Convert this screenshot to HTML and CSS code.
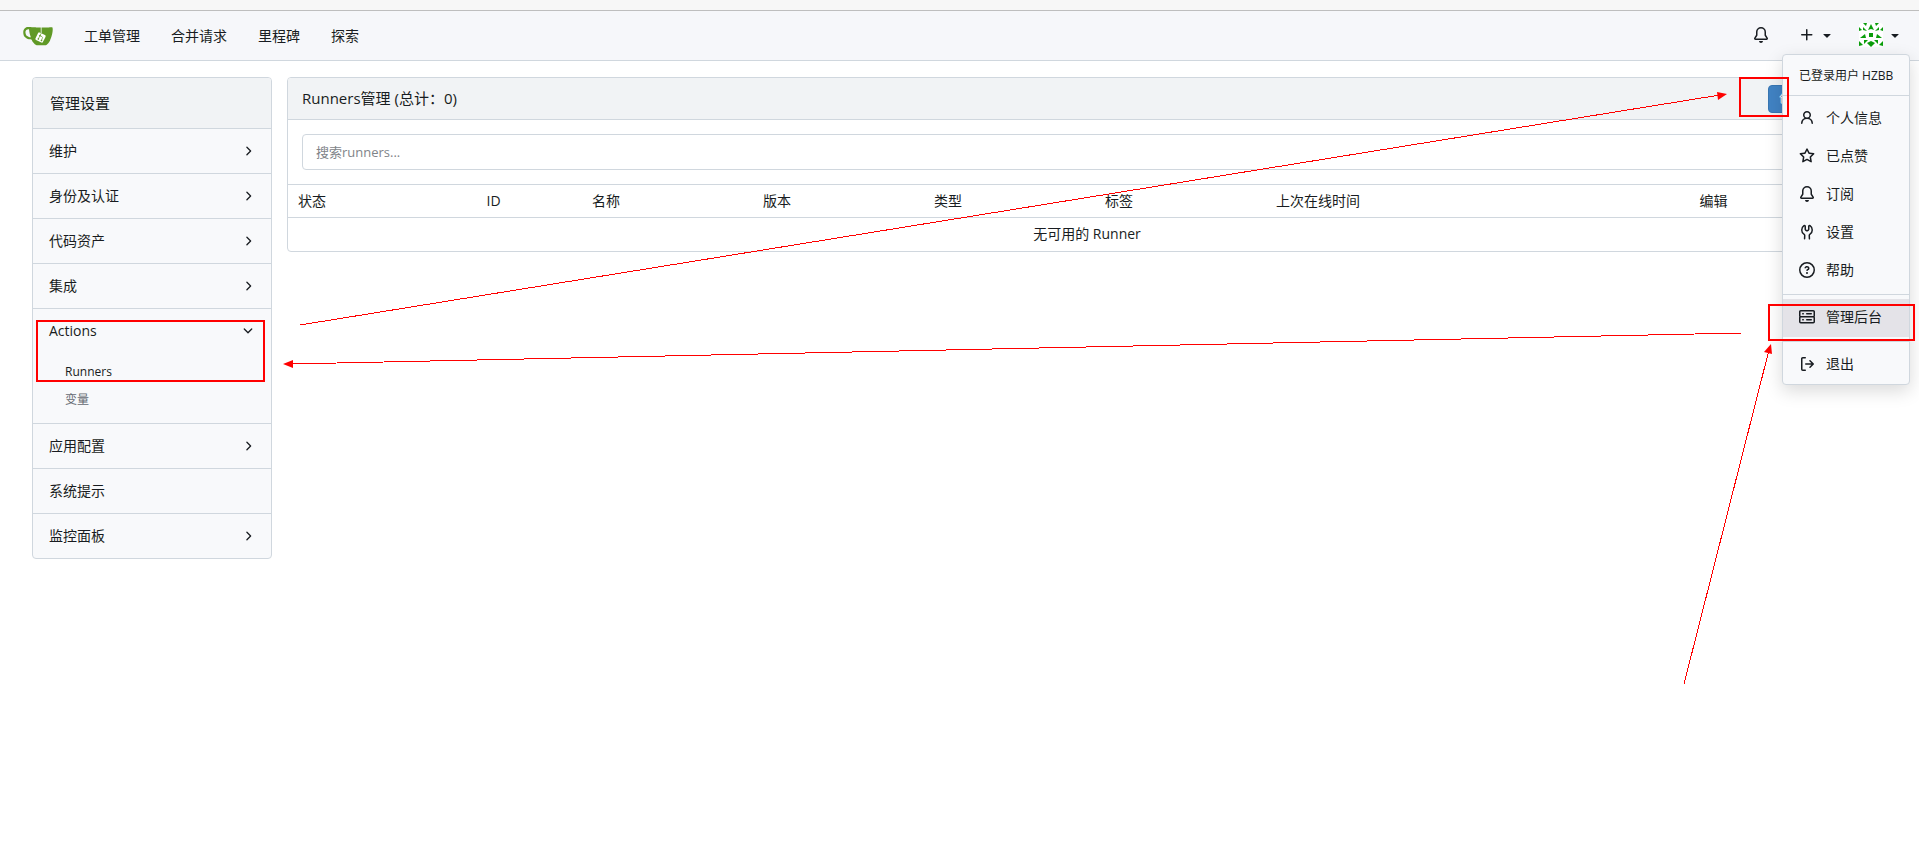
FILE: index.html
```html
<!DOCTYPE html>
<html lang="zh-CN">
<head>
<meta charset="utf-8">
<title>Runners管理</title>
<link rel="stylesheet" href="styles.css">
</head>
<body>
<svg class="sprite" aria-hidden="true">
  <symbol id="bell" viewBox="0 0 16 16"><path d="M8 16a2 2 0 0 0 1.985-1.75c.017-.137-.097-.25-.235-.25h-3.5c-.138 0-.252.113-.235.25A2 2 0 0 0 8 16ZM3 5a5 5 0 0 1 10 0v2.947c0 .05.015.098.042.139l1.703 2.555A1.519 1.519 0 0 1 13.482 13H2.518a1.516 1.516 0 0 1-1.263-2.36l1.703-2.554A.255.255 0 0 0 3 7.947Zm5-3.5A3.5 3.5 0 0 0 4.5 5v2.947c0 .346-.102.683-.294.97l-1.703 2.556a.017.017 0 0 0-.003.01l.001.006c0 .002.002.004.004.006l.006.004.007.001h10.964l.007-.001.006-.004.004-.006.001-.007a.017.017 0 0 0-.003-.01l-1.703-2.554a1.745 1.745 0 0 1-.294-.97V5A3.5 3.5 0 0 0 8 1.500Z"/></symbol>
  <symbol id="plus" viewBox="0 0 16 16"><path d="M7.75 2a.75.75 0 0 1 .75.75V7h4.25a.75.75 0 0 1 0 1.500H8.500v4.250a.75.75 0 0 1-1.500 0V8.500H2.750a.75.75 0 0 1 0-1.500H7V2.750A.75.75 0 0 1 7.750 2Z"/></symbol>
  <symbol id="caret" viewBox="0 0 16 16"><path d="m4.427 7.427 3.396 3.396a.25.25 0 0 0 .354 0l3.396-3.396A.25.25 0 0 0 11.396 7H4.604a.25.25 0 0 0-.177.427Z"/></symbol>
  <symbol id="person" viewBox="0 0 16 16"><path d="M10.561 8.073a6.005 6.005 0 0 1 3.432 5.142.75.75 0 1 1-1.498.07 4.500 4.500 0 0 0-8.990 0 .75.75 0 0 1-1.498-.07 6.004 6.004 0 0 1 3.431-5.142 3.999 3.999 0 1 1 5.123 0ZM10.500 5a2.500 2.500 0 1 0-5 0 2.500 2.500 0 0 0 5 0Z"/></symbol>
  <symbol id="star" viewBox="0 0 16 16"><path d="M8 .25a.75.75 0 0 1 .673.418l1.882 3.815 4.210.612a.75.75 0 0 1 .416 1.279l-3.046 2.970.719 4.192a.751.751 0 0 1-1.088.791L8 12.347l-3.766 1.980a.75.75 0 0 1-1.088-.79l.72-4.194L.818 6.374a.75.75 0 0 1 .416-1.280l4.210-.611L7.327.668A.75.75 0 0 1 8 .25Zm0 2.445L6.615 5.500a.75.75 0 0 1-.564.410l-3.097.450 2.240 2.184a.75.75 0 0 1 .216.664l-.528 3.084 2.769-1.456a.75.75 0 0 1 .698 0l2.770 1.456-.530-3.084a.75.75 0 0 1 .216-.664l2.240-2.183-3.096-.450a.75.75 0 0 1-.564-.410L8 2.694Z"/></symbol>
  <symbol id="tools" viewBox="0 0 16 16"><path d="M5.433 2.304A4.494 4.494 0 0 0 3.500 6c0 1.598.832 3.002 2.090 3.802.518.328.929.923.902 1.640v.008l-.164 3.337a.75.75 0 1 1-1.498-.073l.163-3.330c.002-.085-.050-.216-.207-.316A5.996 5.996 0 0 1 2 6a5.993 5.993 0 0 1 2.567-4.920 1.482 1.482 0 0 1 1.673-.040c.462.296.760.827.760 1.423v2.820c0 .082.041.160.110.206l.750.510a.25.25 0 0 0 .280 0l.750-.510A.249.249 0 0 0 9 5.282V2.463c0-.596.298-1.127.760-1.423a1.482 1.482 0 0 1 1.673.040A5.993 5.993 0 0 1 14 6a5.996 5.996 0 0 1-2.786 5.068c-.157.100-.209.230-.207.315l.163 3.330a.752.752 0 0 1-1.094.714.750.750 0 0 1-.404-.640l-.164-3.345c-.027-.717.384-1.312.902-1.640A4.495 4.495 0 0 0 12.500 6a4.494 4.494 0 0 0-1.933-3.696c-.024.017-.067.067-.067.160v2.818a1.750 1.750 0 0 1-.767 1.448l-.750.510a1.750 1.750 0 0 1-1.966 0l-.750-.510A1.750 1.750 0 0 1 5.500 5.282V2.463c0-.092-.043-.142-.067-.159Z"/></symbol>
  <symbol id="question" viewBox="0 0 16 16"><path d="M0 8a8 8 0 1 1 16 0A8 8 0 0 1 0 8Zm8-6.500a6.500 6.500 0 1 0 0 13 6.500 6.500 0 0 0 0-13ZM6.920 6.085h.001a.749.749 0 1 1-1.342-.670c.169-.339.436-.701.849-.977C6.845 4.160 7.369 4 8 4a2.756 2.756 0 0 1 1.637.525c.503.377.863.965.863 1.725 0 .448-.115.830-.329 1.150-.205.307-.470.513-.692.662-.109.072-.220.138-.313.195l-.006.004a6.240 6.240 0 0 0-.260.160.952.952 0 0 0-.276.245.750.750 0 0 1-1.248-.832c.184-.264.420-.489.692-.661.103-.067.207-.132.313-.195l.007-.004c.100-.061.182-.110.258-.161a.969.969 0 0 0 .277-.245C8.960 6.514 9 6.427 9 6.250a.612.612 0 0 0-.262-.525A1.270 1.270 0 0 0 8 5.500c-.369 0-.595.090-.740.187a1.010 1.010 0 0 0-.340.398ZM9 11a1 1 0 1 1-2 0 1 1 0 0 1 2 0Z"/></symbol>
  <symbol id="server" viewBox="0 0 16 16"><path d="M1.750 1h12.500c.966 0 1.750.784 1.750 1.750v4c0 .372-.116.717-.314 1 .198.283.314.628.314 1v4a1.750 1.750 0 0 1-1.750 1.750H1.750A1.750 1.750 0 0 1 0 12.750v-4c0-.358.109-.707.314-1a1.739 1.739 0 0 1-.314-1v-4C0 1.784.784 1 1.750 1ZM1.500 2.750v4c0 .138.112.250.250.250h12.500a.250.250 0 0 0 .250-.250v-4a.250.250 0 0 0-.250-.250H1.750a.250.250 0 0 0-.250.250Zm.250 5.750a.250.250 0 0 0-.250.250v4c0 .138.112.250.250.250h12.500a.250.250 0 0 0 .250-.250v-4a.250.250 0 0 0-.250-.250ZM7 4.750A.750.750 0 0 1 7.750 4h4.500a.750.750 0 0 1 0 1.500h-4.500A.750.750 0 0 1 7 4.750ZM7.750 10h4.500a.750.750 0 0 1 0 1.500h-4.500a.750.750 0 0 1 0-1.500ZM3 4.750A.750.750 0 0 1 3.750 4h.500a.750.750 0 0 1 0 1.500h-.500A.750.750 0 0 1 3 4.750ZM3.750 10h.500a.750.750 0 0 1 0 1.500h-.500a.750.750 0 0 1 0-1.500Z"/></symbol>
  <symbol id="sign-out" viewBox="0 0 16 16"><path d="M2 2.750C2 1.784 2.784 1 3.750 1h2.500a.750.750 0 0 1 0 1.500h-2.500a.250.250 0 0 0-.250.250v10.500c0 .138.112.250.250.250h2.500a.750.750 0 0 1 0 1.500h-2.500A1.750 1.750 0 0 1 2 13.250Zm10.440 4.500-1.970-1.970a.749.749 0 0 1 .326-1.275.749.749 0 0 1 .734.215l3.250 3.250a.750.750 0 0 1 0 1.060l-3.250 3.250a.749.749 0 0 1-1.275-.326.749.749 0 0 1 .215-.734l1.970-1.970H6.750a.750.750 0 0 1 0-1.500Z"/></symbol>
  <symbol id="right" viewBox="0 0 16 16"><path d="M6.220 3.220a.750.750 0 0 1 1.060 0l4.250 4.250a.750.750 0 0 1 0 1.060l-4.250 4.250a.751.751 0 0 1-1.042-.018.751.751 0 0 1-.018-1.042L9.940 8 6.220 4.280a.750.750 0 0 1 0-1.060Z"/></symbol>
  <symbol id="down" viewBox="0 0 16 16"><path d="M12.780 5.220a.749.749 0 0 1 0 1.060l-4.250 4.250a.749.749 0 0 1-1.060 0L3.220 6.280a.749.749 0 1 1 1.060-1.060L8 8.939l3.720-3.719a.749.749 0 0 1 1.060 0Z"/></symbol>
</svg>

<div class="window-edge"></div>
<nav class="navbar">
  <a class="logo" href="#" aria-label="首页">
    <svg viewBox="0 130 640 410" width="30" height="20">
      <path fill="#fff" d="M395.900 484.200l-126.900-61c-12.500-6-17.900-21.200-11.800-33.800l61-126.900c6-12.500 21.200-17.900 33.800-11.800 17.200 8.300 27.100 13 27.100 13l-.1-109.200 16.700-.1.1 117.100s57.400 24.200 83.100 40.100c3.700 2.300 10.200 6.800 12.900 14.400 2.100 6.100 2 13.100-1 19.300l-61 126.900c-6.300 12.700-21.500 18.100-34 12z"/>
      <path fill="#609926" d="M622.700 149.800c-4.100-4.100-9.600-4-9.600-4s-117.200 6.600-177.900 8c-13.300.3-26.500.6-39.600.7v117.200c-5.500-2.600-11.100-5.300-16.600-7.900 0-36.400-.1-109.200-.1-109.200-29 .4-89.200-2.200-89.200-2.200s-141.400-7.100-156.800-8.500c-9.800-.6-22.500-2.100-39 1.500-8.700 1.800-33.500 7.400-53.800 26.900C-4.900 212.400 6.600 276.200 8 285.800c1.700 11.700 6.900 44.200 31.700 72.500 45.800 56.100 144.400 54.800 144.400 54.800s12.100 28.900 30.600 55.500c25 33.100 50.700 58.900 75.700 62 63 0 188.900-.1 188.900-.1s12 .1 28.300-10.300c14-8.500 26.500-23.400 26.500-23.400s12.900-13.800 30.900-45.300c5.500-9.700 10.100-19.100 14.100-28 0 0 55.200-117.100 55.200-231.100-1.100-34.500-9.600-40.600-11.600-42.600zM125.600 353.900c-25.900-8.500-36.900-18.700-36.900-18.700S69.600 321.800 60 295.400c-16.500-44.200-1.400-71.200-1.400-71.200s8.400-22.500 38.500-30c13.800-3.700 31-3.100 31-3.100s7.100 59.400 15.700 94.200c7.200 29.200 24.800 77.700 24.800 77.700s-26.100-3.100-43-9.100zm300.300 107.600s-6.100 14.500-19.600 15.400c-5.800.4-10.300-1.200-10.300-1.200s-.3-.1-5.300-2.100l-112.900-55s-10.900-5.700-12.800-15.600c-2.200-8.100 2.700-18.100 2.700-18.100L322 273s4.800-9.700 12.200-13c.6-.3 2.300-1 4.500-1.500 8.100-2.100 18 2.800 18 2.800l110.700 53.700s12.600 5.700 15.300 16.200c1.900 7.400-.5 14-1.800 17.200-6.300 15.400-55 113.100-55 113.100z"/>
      <g fill="#609926" stroke="#609926" stroke-width="14"><circle cx="327" cy="398" r="11"/><circle cx="361" cy="328" r="11"/><circle cx="394" cy="431" r="11"/><path fill="none" d="M327 398l59-120M361 328l45 21q17 8 9 27l-21 55"/></g>
    </svg>
  </a>
  <a class="nav-link" href="#">工单管理</a>
  <a class="nav-link" href="#">合并请求</a>
  <a class="nav-link" href="#">里程碑</a>
  <a class="nav-link" href="#">探索</a>
  <div class="nav-right">
    <button class="nav-button notifications" aria-label="通知"><svg class="icon"><use href="#bell"/></svg></button>
    <button class="nav-button" aria-label="创建"><svg class="icon"><use href="#plus"/></svg><svg class="icon"><use href="#caret"/></svg></button>
    <button class="nav-button" aria-label="用户菜单">
      <svg class="avatar" viewBox="0 0 24 24"><rect width="24" height="24" rx="3" fill="#fff"/><path fill="#0a9d0a" d="M10 10h4v4h-4zM12 1l3 6-3-1-3 1zM4 0h4l-1 3zM20 0h-4l1 3zM0 4v4l3-1zM24 4v4l-3-1zM4 4l4 4-4-1zM20 4l-4 4 4-1zM1 15l5-4 1 4zM23 15l-5-4-1 4zM5 17l4 0-4 4zM19 17h-4l4 4zM0 18v5l4-1zM24 18v5l-4-1zM8 20l4-2 4 2-4 4z"/></svg>
      <svg class="icon"><use href="#caret"/></svg>
    </button>
    <div class="menu">
      <div class="menu-header">已登录用户 HZBB</div>
      <hr>
      <a href="#"><svg class="icon"><use href="#person"/></svg>个人信息</a>
      <a href="#"><svg class="icon"><use href="#star"/></svg>已点赞</a>
      <a href="#"><svg class="icon"><use href="#bell"/></svg>订阅</a>
      <a href="#"><svg class="icon"><use href="#tools"/></svg>设置</a>
      <a href="#"><svg class="icon"><use href="#question"/></svg>帮助</a>
      <hr>
      <a class="active" href="#"><svg class="icon"><use href="#server"/></svg>管理后台</a>
      <hr>
      <a href="#"><svg class="icon"><use href="#sign-out"/></svg>退出</a>
    </div>
  </div>
</nav>

<div class="page">
  <aside class="sidebar">
    <div class="sidebar-title">管理设置</div>
    <details><summary>维护<svg class="chevron"><use href="#right"/></svg></summary></details>
    <details><summary>身份及认证<svg class="chevron"><use href="#right"/></svg></summary></details>
    <details><summary>代码资产<svg class="chevron"><use href="#right"/></svg></summary></details>
    <details><summary>集成<svg class="chevron"><use href="#right"/></svg></summary></details>
    <details open>
      <summary>Actions<svg class="chevron"><use href="#down"/></svg></summary>
      <div class="submenu"><a class="current" href="#">Runners</a><a href="#">变量</a></div>
    </details>
    <details><summary>应用配置<svg class="chevron"><use href="#right"/></svg></summary></details>
    <a class="sidebar-link" href="#">系统提示</a>
    <details><summary>监控面板<svg class="chevron"><use href="#right"/></svg></summary></details>
  </aside>
  <main class="panel">
    <header class="panel-header"><h4>Runners管理 (总计：0)</h4><button class="create">创建 Runner</button></header>
    <form class="search"><input type="text" aria-label="搜索runners" placeholder="搜索runners..."></form>
    <table class="runners">
      <colgroup><col class="status"><col class="id"><col class="field"><col class="field"><col class="field"><col class="field"><col class="online"><col class="edit"></colgroup>
      <thead><tr><th>状态</th><th>ID</th><th>名称</th><th>版本</th><th>类型</th><th>标签</th><th>上次在线时间</th><th>编辑</th></tr></thead>
      <tbody><tr><td class="empty" colspan="8">无可用的 Runner</td></tr></tbody>
    </table>
  </main>
</div>

<svg class="annotations" aria-hidden="true">
  <g fill="none" stroke="#f00" stroke-width="2"><rect x="1740" y="78" width="48" height="38"/><rect x="1769" y="305" width="145" height="35"/><rect x="37" y="321" width="227" height="60"/></g>
  <g fill="none" stroke="#f00" shape-rendering="crispEdges"><path d="M300 325L1720 95M1742 333L290 364M1684 684L1769 350"/></g>
  <path fill="#f00" d="M1727 94l-10-2 1 8zM283 364l10-4v8zM1771 344l-7 8 8 2z"/>
</svg>
</body>
</html>
```
FILE: styles.css
```css
* { box-sizing: border-box; }
body {
  margin: 0;
  background: #fff;
  color: #181c21;
  font: 14px/20px "Open Sans", "Noto Sans CJK SC", sans-serif;
}
a { color: inherit; text-decoration: none; }
button { font: inherit; color: inherit; border: 0; background: none; padding: 0; }
.sprite { display: none; }
.icon { width: 16px; height: 16px; fill: currentColor; flex: none; }
.window-edge { height: 11px; background: #f7f7f7; border-bottom: 1px solid #bebebe; }

.navbar {
  display: flex;
  align-items: center;
  gap: 31px;
  height: 50px;
  padding: 0 16px 0 23px;
  background: #f6f7fa;
  border-bottom: 1px solid #d0d7de;
}
.logo { display: flex; }
.nav-right { position: relative; display: flex; align-items: center; gap: 24px; margin-left: auto; padding-bottom: 2px; }
.nav-button { display: flex; align-items: center; gap: 4px; }
.notifications { margin-right: 6px; }
.avatar { width: 24px; height: 24px; }
.menu {
  position: absolute;
  z-index: 1;
  top: 100%;
  right: -7px;
  margin-top: 5px;
  width: 128px;
  background: #f8f9fb;
  border: 1px solid #d0d7de;
  border-radius: 4px;
  box-shadow: 0 6px 18px rgba(0, 0, 0, .15);
}
.menu-header { padding: 11px 16px 9px; font-size: 12px; white-space: nowrap; }
.menu hr { height: 1px; margin: 0 0 4px; border: 0; background: #d0d7de; }
.menu a + hr { margin-top: 4px; }
.menu a { display: flex; align-items: center; gap: 11px; height: 38px; padding: 0 16px 2px; }
.menu .active { background: #e4e3e8; }

.page { display: flex; align-items: flex-start; gap: 15px; padding: 16px 32px; }
.sidebar {
  flex: 0 0 240px;
  background: #f8f9fb;
  border: 1px solid #d0d7de;
  border-radius: 4px;
  overflow: hidden;
}
.sidebar-title { padding: 15px 17px; background: #f1f3f5; font-size: 15px; }
.sidebar details, .sidebar-link { display: block; border-top: 1px solid #d0d7de; }
.sidebar summary { display: flex; align-items: center; justify-content: space-between; list-style: none; }
.sidebar summary, .sidebar-link { height: 45px; padding: 0 16px; }
.sidebar summary { height: 44px; }
.sidebar-link { line-height: 44px; }
.chevron { width: 14px; height: 14px; fill: currentColor; }
.submenu { padding: 5px 32px 9px; font-size: 12px; }
.submenu a { display: block; line-height: 28px; color: #656a72; }
.submenu .current { color: #181c21; }

.panel { flex: 1; border: 1px solid #d0d7de; border-radius: 4px; }
.panel-header {
  display: flex;
  align-items: center;
  justify-content: space-between;
  height: 42px;
  padding: 0 14px;
  background: #f1f3f5;
  border-bottom: 1px solid #d0d7de;
  border-radius: 3px 3px 0 0;
}
.panel-header h4 { margin: 0; padding-bottom: 2px; font-size: 15px; font-weight: 400; }
.create {
  width: 104px;
  height: 28px;
  padding: 0 10px;
  background: #4183c4;
  border: 1px solid #3876b3;
  border-radius: 4px;
  color: #fff;
  font-size: 12px;
  text-align: left;
}
.search { padding: 14px; }
.search input {
  display: block;
  width: 100%;
  height: 36px;
  padding: 0 13px;
  border: 1px solid #d0d7de;
  border-radius: 4px;
  font: inherit;
  font-size: 13px;
}
.search input::placeholder { color: #7f8489; }
.runners { width: 100%; table-layout: fixed; border-collapse: collapse; }
.runners th, .runners td {
  height: 33px;
  padding: 0 10px;
  border-top: 1px solid #d0d7de;
  font-weight: 400;
  text-align: left;
}
.runners .empty { text-align: center; }
.status { width: 11.8%; }
.id { width: 6.6%; }
.field { width: 10.7%; }
.online { width: 26.5%; }
.edit { width: 12.3%; }

.annotations {
  position: absolute;
  z-index: 2;
  top: 0;
  left: 0;
  width: 100%;
  height: 700px;
  pointer-events: none;
}
```
